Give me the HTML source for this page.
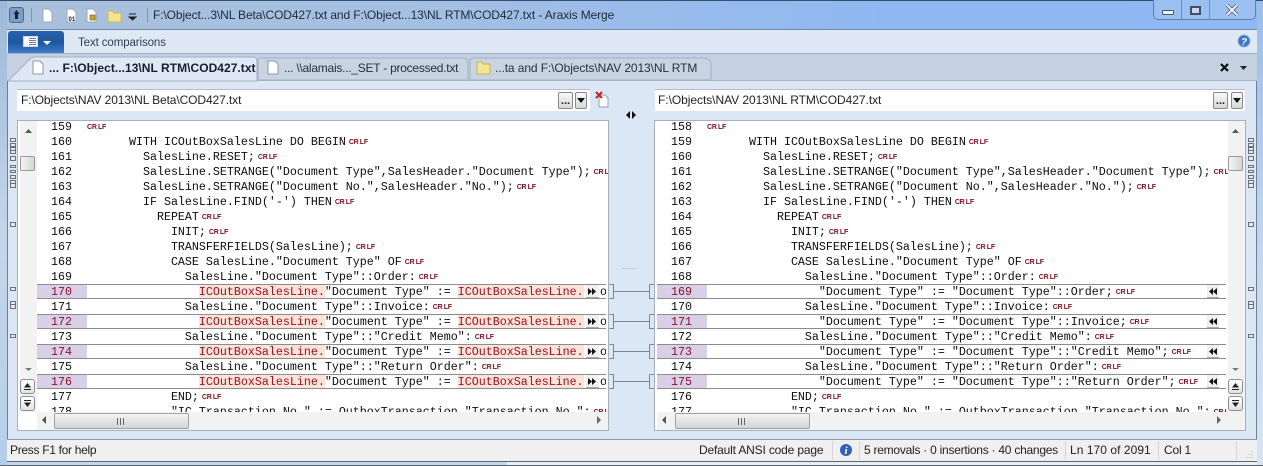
<!DOCTYPE html>
<html><head><meta charset="utf-8"><style>
html,body{margin:0;padding:0;width:1263px;height:466px;overflow:hidden;background:#dce7f5}
*{box-sizing:border-box}
#w{position:relative;width:1263px;height:466px;overflow:hidden;font-family:"Liberation Sans",sans-serif;font-size:12px;color:#222}
.a{position:absolute}
.t{position:absolute;white-space:pre;line-height:16px}
.pane{position:absolute;background:#fff;border:1px solid #a9b0ba;overflow:hidden;top:120px;height:311px}
.row{position:absolute;left:0;right:0;height:15px;line-height:15px;white-space:pre;font:11.67px/15px "Liberation Mono",monospace;color:#0c0c0c;overflow:hidden}
.row i{position:absolute;top:0;font-style:normal;width:50px;text-align:right;padding-right:15px}
.row u{position:absolute;top:0;text-decoration:none}
.row b{display:inline-block;font:bold 7px/15px "Liberation Sans",sans-serif;color:#7e1020;margin-left:3px;vertical-align:top;word-spacing:-.5px;letter-spacing:-.2px}
.row s{text-decoration:none;background:#fbe3d8;color:#9a1030}
.ch{position:absolute;height:15px;border-top:1px solid #8c8c8c;border-bottom:1px solid #8c8c8c;background:#fff}
.ch .row{height:13px}
.pur{position:absolute;top:0;height:13px;width:50px;background:#d9cfe6}
.btn{position:absolute;top:0;height:13px;background:#f0f0f0;border-bottom:1px solid #aaa}
.btn svg{position:absolute;left:2px;top:2px}
.sb{position:absolute;background:#f2f2f2}
.sbtn{position:absolute;width:15px;height:15px;border:1px solid #8a8f96;border-radius:3px;background:linear-gradient(#fff,#e2e2e2)}
.sep{position:absolute;top:441px;width:1px;height:19px;background:#d5d5d5}
.fld{position:absolute;top:89px;height:22px;background:#fff;border-top:1px solid #b8bec8}
.dd{position:absolute;top:92px;height:17px;border:1px solid #8a8a8a;border-radius:2px;background:linear-gradient(#f8f8f8,#d8d8d8)}
</style></head><body><div id="w">

<!-- title bar -->
<div class="a" style="left:0;top:0;width:1263px;height:466px;background:linear-gradient(90deg,#a9c0dc 0,#a5c0e2 30%,#8fb8f2 70%,#8fb8f4 100%);border-top:1px solid #35506f"></div>
<div class="a" style="left:0;top:1px;width:7px;height:465px;background:linear-gradient(#9db8d8,#c3d6ea 50%,#b5cee8)"></div>
<div class="a" style="left:1257px;top:1px;width:6px;height:465px;background:linear-gradient(#9bbde8,#c8d9ee 60%,#d8e4f2)"></div>
<div class="a" style="left:7px;top:461px;width:500px;height:4px;background:#c4d8ee"></div>
<div class="a" style="left:507px;top:461px;width:750px;height:4px;background:#e8eff7"></div>
<div class="a" style="left:0;top:465px;width:1263px;height:1px;background:#5c6670"></div>

<!-- content background -->
<div class="a" style="left:7px;top:81px;width:1250px;height:358px;background:#dce7f5;border-left:1px solid #6f7f94;border-right:1px solid #6f7f94"></div>

<!-- quick access -->
<div class="a" style="left:9px;top:7px;width:15px;height:16px;background:#7c9dc4;border:1px solid #4a6a90;border-radius:3px"></div>
<svg class="a" style="left:9px;top:7px" width="15" height="16"><path d="M7.500 3l3 4h-1.500v5h-3v-5h-1.500z" fill="#14243c"/></svg>
<div class="a" style="left:31px;top:8px;width:1px;height:14px;background:#7f93ad"></div>
<svg class="a" style="left:40px;top:7px" width="105" height="18">
<path d="M3 2h6l3 3v10H3z" fill="#fff" stroke="#9aa8b8"/>
<path d="M27 2h6l3 3v10h-9z" fill="#fff" stroke="#9aa8b8"/><text x="28.500" y="14" font-family="Liberation Sans" font-size="6" font-weight="bold" fill="#222">01</text>
<path d="M47 2h6l3 3v10h-9z" fill="#fff" stroke="#9aa8b8"/><rect x="50" y="8" width="5" height="5" fill="#d8a020" stroke="#555" stroke-width=".6"/>
<path d="M68 4h5l1 2h7v9H68z" fill="#f4e48c" stroke="#c8b860"/>
<path d="M89 7h7M89 10l3.500 3 3.500-3z" stroke="#222" fill="#222"/>
</svg>
<div class="a" style="left:147px;top:8px;width:1px;height:14px;background:#7f93ad"></div>
<div class="t" style="left:153px;top:7px;font-size:12px;letter-spacing:-.11px;color:#1f2a38">F:\Object...3\NL Beta\COD427.txt and F:\Object...13\NL RTM\COD427.txt - Araxis Merge</div>

<!-- window buttons -->
<div class="a" style="left:1153px;top:0;width:103px;height:20px;border:1px solid #5f7fa8;border-top:0;border-radius:0 0 5px 5px;background:#9ac0f2"></div>
<div class="a" style="left:1181px;top:0;width:1px;height:19px;background:#6f8fb8"></div>
<div class="a" style="left:1209px;top:0;width:1px;height:19px;background:#6f8fb8"></div>
<div class="a" style="left:1162px;top:10px;width:12px;height:5px;background:#f4f6fa;border:1px solid #47586e;border-radius:1px"></div>
<div class="a" style="left:1190px;top:6px;width:11px;height:9px;background:#c8d9ee;border:2px solid #3f5068"></div>
<svg class="a" style="left:1225px;top:4px" width="15" height="12"><path d="M2 1l10 10M12 1L2 11" stroke="#3f4f66" stroke-width="3.500"/><path d="M2 1l10 10M12 1L2 11" stroke="#eef2f8" stroke-width="2"/></svg>

<!-- ribbon -->
<div class="a" style="left:7px;top:29px;width:1250px;height:25px;background:#dfe9f5;border-top:1px solid #6f8bb0;border-bottom:1px solid #a0b0d8"></div>
<div class="a" style="left:8px;top:31px;width:56px;height:22px;background:linear-gradient(#2a62ad,#1e56a0 50%,#3f7cc8);border-radius:3px 3px 0 0"></div>
<div class="a" style="left:23px;top:36px;width:15px;height:11px;background:#fff;border:1px solid #cfd8e6"></div>
<div class="a" style="left:29px;top:38px;width:7px;height:7px;background:repeating-linear-gradient(#6f7f99 0 1px,#fff 1px 2px)"></div>
<div class="a" style="left:43px;top:41px;width:0;height:0;border:4px solid transparent;border-top:4px solid #fff"></div>
<div class="t" style="left:78px;top:35px;font-size:11.500px;letter-spacing:-.1px;color:#2c3f58">Text comparisons</div>
<svg class="a" style="left:1237px;top:34px" width="14" height="14"><circle cx="7" cy="7" r="6" fill="#3a78c8" stroke="#8fb0d8"/><text x="7" y="11" font-family="Liberation Sans" font-size="10" font-weight="bold" font-style="italic" fill="#fff" text-anchor="middle">?</text></svg>

<!-- tab strip -->
<div class="a" style="left:7px;top:54px;width:1250px;height:27px;background:#c5d0e0;border-bottom:1px solid #a8b4c6"></div>
<svg class="a" style="left:8px;top:55px" width="720" height="27">
<path d="M250 25V6q0-3 3-3h202q5 0 5 5v17z" fill="#c9d4e3" stroke="#a4b0c3"/>
<path d="M462 25V6q0-3 3-3h231q6 0 7 6v16z" fill="#c9d4e3" stroke="#a4b0c3"/>
<path d="M0 26L22 4q2-2 5-2h218q4 0 4 4v20z" fill="#dfe9f5" stroke="#a4b0c3"/>
</svg>
<svg class="a" style="left:30px;top:59px" width="16" height="17"><path d="M3 2h7l3 3v10H3z" fill="#fff" stroke="#8c99a8"/></svg>
<div class="t" style="left:49px;top:60px;font-size:12px;font-weight:bold;letter-spacing:.04px;color:#15202e">... F:\Object...13\NL RTM\COD427.txt</div>
<svg class="a" style="left:265px;top:59px" width="16" height="17"><path d="M3 2h7l3 3v10H3z" fill="#fff" stroke="#8c99a8"/></svg>
<div class="t" style="left:284px;top:60px;font-size:12px;letter-spacing:-.25px;color:#26303e">... \\alamais..._SET - processed.txt</div>
<svg class="a" style="left:476px;top:60px" width="16" height="15"><path d="M1 2h5l1 2h7v10H1z" fill="#f4e68e" stroke="#c2b25c"/></svg>
<div class="t" style="left:495px;top:60px;font-size:12px;letter-spacing:-.1px;color:#26303e">...ta and F:\Objects\NAV 2013\NL RTM</div>
<svg class="a" style="left:1219px;top:62px" width="32" height="12"><path d="M2 2l7 7M9 2L2 9" stroke="#111" stroke-width="2.200"/><path d="M21 4h7l-3.500 4z" fill="#222"/></svg>

<!-- path fields -->
<div class="fld" style="left:17px;width:573px"></div>
<div class="t" style="left:21px;top:92px;font-size:12px;letter-spacing:-.1px">F:\Objects\NAV 2013\NL Beta\COD427.txt</div>
<div class="dd" style="left:558px;width:15px;font:bold 11px/17px 'Liberation Sans';text-align:center">...</div>
<div class="dd" style="left:575px;width:12px"></div><div class="a" style="left:577px;top:98px;border:4px solid transparent;border-top:5px solid #111"></div>
<svg class="a" style="left:594px;top:90px" width="16" height="19"><path d="M5 5h6l3 3v9H5z" fill="#fff" stroke="#8fa0b4"/><path d="M2 2l6 6M8 2L2 8" stroke="#c8202a" stroke-width="2"/></svg>
<div class="fld" style="left:655px;width:590px"></div>
<div class="t" style="left:658px;top:92px;font-size:12px;letter-spacing:-.05px">F:\Objects\NAV 2013\NL RTM\COD427.txt</div>
<div class="dd" style="left:1213px;width:15px;font:bold 11px/17px 'Liberation Sans';text-align:center">...</div>
<div class="dd" style="left:1231px;width:12px"></div><div class="a" style="left:1233px;top:98px;border:4px solid transparent;border-top:5px solid #111"></div>
<svg class="a" style="left:625px;top:110px" width="13" height="10"><path d="M5 1v8L1 5zM7 1v8l4-4z" fill="#111"/></svg>
<div class="t" style="left:622px;top:258px;font-size:9px;color:#98a4b2;letter-spacing:0">......</div>

<!-- left pane -->
<div class="pane" style="left:17px;width:592px"></div>
<div class="sb" style="left:20px;top:121px;width:17px;height:291px"></div>
<div class="sb" style="left:37px;top:412px;width:571px;height:18px"></div>

<div class="a" style="left:37px;top:121px;width:571px;height:291px;overflow:hidden">
<div class="row" style="top:-1px"><i>159</i><u style="left:50px"><b style="margin:0">CR LF</b></u></div>
<div class="row" style="top:14px"><i>160</i><u style="left:50px">      WITH ICOutBoxSalesLine DO BEGIN<b>CR LF</b></u></div>
<div class="row" style="top:29px"><i>161</i><u style="left:50px">        SalesLine.RESET;<b>CR LF</b></u></div>
<div class="row" style="top:44px"><i>162</i><u style="left:50px">        SalesLine.SETRANGE("Document Type",SalesHeader."Document Type");<b>CR LF</b></u></div>
<div class="row" style="top:59px"><i>163</i><u style="left:50px">        SalesLine.SETRANGE("Document No.",SalesHeader."No.");<b>CR LF</b></u></div>
<div class="row" style="top:74px"><i>164</i><u style="left:50px">        IF SalesLine.FIND('-') THEN<b>CR LF</b></u></div>
<div class="row" style="top:89px"><i>165</i><u style="left:50px">          REPEAT<b>CR LF</b></u></div>
<div class="row" style="top:104px"><i>166</i><u style="left:50px">            INIT;<b>CR LF</b></u></div>
<div class="row" style="top:119px"><i>167</i><u style="left:50px">            TRANSFERFIELDS(SalesLine);<b>CR LF</b></u></div>
<div class="row" style="top:134px"><i>168</i><u style="left:50px">            CASE SalesLine."Document Type" OF<b>CR LF</b></u></div>
<div class="row" style="top:149px"><i>169</i><u style="left:50px">              SalesLine."Document Type"::Order:<b>CR LF</b></u></div>
<div class="row" style="top:179px"><i>171</i><u style="left:50px">              SalesLine."Document Type"::Invoice:<b>CR LF</b></u></div>
<div class="row" style="top:209px"><i>173</i><u style="left:50px">              SalesLine."Document Type"::"Credit Memo":<b>CR LF</b></u></div>
<div class="row" style="top:239px"><i>175</i><u style="left:50px">              SalesLine."Document Type"::"Return Order":<b>CR LF</b></u></div>
<div class="row" style="top:269px"><i>177</i><u style="left:50px">            END;<b>CR LF</b></u></div>
<div class="row" style="top:284px"><i>178</i><u style="left:50px">            "IC Transaction No." := OutboxTransaction."Transaction No.";<b>CR LF</b></u></div>

<div class="ch" style="left:0;top:163px;width:569px"><div class="pur"></div><div class="row" style="top:0"><i style="color:#8b1030">170</i><u style="left:50px">                <s>ICOutBoxSalesLine.</s>"Document Type" := <s>ICOutBoxSalesLine.</s></u></div><div class="btn" style="left:549px;width:13px"><svg width="9" height="9"><path d="M0 1v7l4-3.500zM4 1v7l4-3.500z" fill="#111"/></svg></div><div class="row" style="top:0;left:563px">o</div></div>
<div class="ch" style="left:0;top:193px;width:569px"><div class="pur"></div><div class="row" style="top:0"><i style="color:#8b1030">172</i><u style="left:50px">                <s>ICOutBoxSalesLine.</s>"Document Type" := <s>ICOutBoxSalesLine.</s></u></div><div class="btn" style="left:549px;width:13px"><svg width="9" height="9"><path d="M0 1v7l4-3.500zM4 1v7l4-3.500z" fill="#111"/></svg></div><div class="row" style="top:0;left:563px">o</div></div>
<div class="ch" style="left:0;top:223px;width:569px"><div class="pur"></div><div class="row" style="top:0"><i style="color:#8b1030">174</i><u style="left:50px">                <s>ICOutBoxSalesLine.</s>"Document Type" := <s>ICOutBoxSalesLine.</s></u></div><div class="btn" style="left:549px;width:13px"><svg width="9" height="9"><path d="M0 1v7l4-3.500zM4 1v7l4-3.500z" fill="#111"/></svg></div><div class="row" style="top:0;left:563px">o</div></div>
<div class="ch" style="left:0;top:253px;width:569px"><div class="pur"></div><div class="row" style="top:0"><i style="color:#8b1030">176</i><u style="left:50px">                <s>ICOutBoxSalesLine.</s>"Document Type" := <s>ICOutBoxSalesLine.</s></u></div><div class="btn" style="left:549px;width:13px"><svg width="9" height="9"><path d="M0 1v7l4-3.500zM4 1v7l4-3.500z" fill="#111"/></svg></div><div class="row" style="top:0;left:563px">o</div></div>
</div>

<!-- left scroll -->
<svg class="a" style="left:24px;top:128px" width="10" height="6"><path d="M1 5h7L4.500 1z" fill="#555"/></svg>
<svg class="a" style="left:24px;top:367px" width="10" height="5"><path d="M1 1h7L4.500 4z" fill="#777"/></svg>
<div class="a" style="left:20px;top:156px;width:15px;height:15px;border:1px solid #9a9a9a;border-radius:2px;background:linear-gradient(90deg,#f4f4f4,#d6d6d6)"></div>
<div class="sbtn" style="left:20px;top:379px"><svg width="13" height="13"><path d="M3 7.500L6.500 3 10 7.500z" fill="#222"/><path d="M3 9.500h7" stroke="#222"/></svg></div>
<div class="sbtn" style="left:20px;top:396px"><svg width="13" height="13"><path d="M3 5.500L6.500 10 10 5.500z" fill="#222"/><path d="M3 3.500h7" stroke="#222"/></svg></div>
<svg class="a" style="left:40px;top:415px" width="8" height="10"><path d="M6 1v8L2 5z" fill="#555"/></svg>
<div class="a" style="left:54px;top:413px;width:135px;height:16px;border:1px solid #a2a2a2;border-radius:2px;background:linear-gradient(#f4f4f4,#d4d4d4)"></div>
<div class="a" style="left:117px;top:418px;width:7px;height:7px;background:repeating-linear-gradient(90deg,#666 0 1px,transparent 1px 3px)"></div>
<svg class="a" style="left:595px;top:415px" width="8" height="10"><path d="M2 1v8l4-4z" fill="#666"/></svg>

<!-- connectors -->
<svg class="a" style="left:608px;top:280px" width="48" height="135" fill="none" stroke="#7d8791">
<path d="M1.500 4.500h4v14h-4M41.500 4.500h5M41.500 4.500v14h5M5.500 11.500h36"/>
<path d="M1.500 34.500h4v14h-4M41.500 34.500h5M41.500 34.500v14h5M5.500 41.500h36"/>
<path d="M1.500 64.500h4v14h-4M41.500 64.500h5M41.500 64.500v14h5M5.500 71.500h36"/>
<path d="M1.500 94.500h4v14h-4M41.500 94.500h5M41.500 94.500v14h5M5.500 101.500h36"/>
</svg>

<!-- right pane -->
<div class="pane" style="left:654px;width:592px"></div>
<div class="sb" style="left:1228px;top:121px;width:17px;height:291px"></div>
<div class="sb" style="left:657px;top:412px;width:588px;height:18px"></div>

<div class="a" style="left:657px;top:121px;width:571px;height:291px;overflow:hidden">
<div class="row" style="top:-1px"><i>158</i><u style="left:50px"><b style="margin:0">CR LF</b></u></div>
<div class="row" style="top:14px"><i>159</i><u style="left:50px">      WITH ICOutBoxSalesLine DO BEGIN<b>CR LF</b></u></div>
<div class="row" style="top:29px"><i>160</i><u style="left:50px">        SalesLine.RESET;<b>CR LF</b></u></div>
<div class="row" style="top:44px"><i>161</i><u style="left:50px">        SalesLine.SETRANGE("Document Type",SalesHeader."Document Type");<b>CR LF</b></u></div>
<div class="row" style="top:59px"><i>162</i><u style="left:50px">        SalesLine.SETRANGE("Document No.",SalesHeader."No.");<b>CR LF</b></u></div>
<div class="row" style="top:74px"><i>163</i><u style="left:50px">        IF SalesLine.FIND('-') THEN<b>CR LF</b></u></div>
<div class="row" style="top:89px"><i>164</i><u style="left:50px">          REPEAT<b>CR LF</b></u></div>
<div class="row" style="top:104px"><i>165</i><u style="left:50px">            INIT;<b>CR LF</b></u></div>
<div class="row" style="top:119px"><i>166</i><u style="left:50px">            TRANSFERFIELDS(SalesLine);<b>CR LF</b></u></div>
<div class="row" style="top:134px"><i>167</i><u style="left:50px">            CASE SalesLine."Document Type" OF<b>CR LF</b></u></div>
<div class="row" style="top:149px"><i>168</i><u style="left:50px">              SalesLine."Document Type"::Order:<b>CR LF</b></u></div>
<div class="row" style="top:179px"><i>170</i><u style="left:50px">              SalesLine."Document Type"::Invoice:<b>CR LF</b></u></div>
<div class="row" style="top:209px"><i>172</i><u style="left:50px">              SalesLine."Document Type"::"Credit Memo":<b>CR LF</b></u></div>
<div class="row" style="top:239px"><i>174</i><u style="left:50px">              SalesLine."Document Type"::"Return Order":<b>CR LF</b></u></div>
<div class="row" style="top:269px"><i>176</i><u style="left:50px">            END;<b>CR LF</b></u></div>
<div class="row" style="top:284px"><i>177</i><u style="left:50px">            "IC Transaction No." := OutboxTransaction."Transaction No.";<b>CR LF</b></u></div>

<div class="ch" style="left:0;top:163px;width:569px"><div class="pur"></div><div class="row" style="top:0"><i style="color:#8b1030">169</i><u style="left:50px">                "Document Type" := "Document Type"::Order;<b>CR LF</b></u></div><div class="btn" style="left:550px;width:12px"><svg width="9" height="9"><path d="M4 1v7L0 4.500zM8 1v7L4 4.500z" fill="#111"/></svg></div></div>
<div class="ch" style="left:0;top:193px;width:569px"><div class="pur"></div><div class="row" style="top:0"><i style="color:#8b1030">171</i><u style="left:50px">                "Document Type" := "Document Type"::Invoice;<b>CR LF</b></u></div><div class="btn" style="left:550px;width:12px"><svg width="9" height="9"><path d="M4 1v7L0 4.500zM8 1v7L4 4.500z" fill="#111"/></svg></div></div>
<div class="ch" style="left:0;top:223px;width:569px"><div class="pur"></div><div class="row" style="top:0"><i style="color:#8b1030">173</i><u style="left:50px">                "Document Type" := "Document Type"::"Credit Memo";<b>CR LF</b></u></div><div class="btn" style="left:550px;width:12px"><svg width="9" height="9"><path d="M4 1v7L0 4.500zM8 1v7L4 4.500z" fill="#111"/></svg></div></div>
<div class="ch" style="left:0;top:253px;width:569px"><div class="pur"></div><div class="row" style="top:0"><i style="color:#8b1030">175</i><u style="left:50px">                "Document Type" := "Document Type"::"Return Order";<b>CR LF</b></u></div><div class="btn" style="left:550px;width:12px"><svg width="9" height="9"><path d="M4 1v7L0 4.500zM8 1v7L4 4.500z" fill="#111"/></svg></div></div>
</div>

<!-- right scroll -->
<svg class="a" style="left:1231px;top:128px" width="10" height="6"><path d="M1 5h7L4.500 1z" fill="#555"/></svg>
<svg class="a" style="left:1231px;top:367px" width="10" height="5"><path d="M1 1h7L4.500 4z" fill="#777"/></svg>
<div class="a" style="left:1228px;top:156px;width:15px;height:15px;border:1px solid #9a9a9a;border-radius:2px;background:linear-gradient(90deg,#f4f4f4,#d6d6d6)"></div>
<div class="sbtn" style="left:1228px;top:379px"><svg width="13" height="13"><path d="M3 7.500L6.500 3 10 7.500z" fill="#222"/><path d="M3 9.500h7" stroke="#222"/></svg></div>
<div class="sbtn" style="left:1228px;top:396px"><svg width="13" height="13"><path d="M3 5.500L6.500 10 10 5.500z" fill="#222"/><path d="M3 3.500h7" stroke="#222"/></svg></div>
<svg class="a" style="left:660px;top:415px" width="8" height="10"><path d="M6 1v8L2 5z" fill="#555"/></svg>
<div class="a" style="left:675px;top:413px;width:135px;height:16px;border:1px solid #a2a2a2;border-radius:2px;background:linear-gradient(#f4f4f4,#d4d4d4)"></div>
<div class="a" style="left:738px;top:418px;width:7px;height:7px;background:repeating-linear-gradient(90deg,#666 0 1px,transparent 1px 3px)"></div>
<svg class="a" style="left:1215px;top:415px" width="8" height="10"><path d="M2 1v8l4-4z" fill="#666"/></svg>

<!-- overview strips -->
<svg class="a" style="left:9px;top:130px" width="8" height="215" fill="#e4e9f0" stroke="#6c7078">
<path d="M1.500 8.500h5v3h-5zM1.500 13.500h5v3h-5zM1.500 17.500h5v3h-5zM1.500 20.500h5v3h-5zM1.500 26.500h5v4h-5zM1.500 35.500h5v2h-5zM1.500 40.500h5v2h-5zM1.500 45.500h5v3h-5zM1.500 50.500h5v3h-5zM1.500 53.500h5v4h-5zM1.500 92.500h5v4h-5zM1.500 157.500h5v3h-5zM1.500 171.500h5v3h-5zM1.500 174.500h5v4h-5zM1.500 204.500h5v3h-5z"/>
</svg>
<svg class="a" style="left:1247px;top:130px" width="8" height="215" fill="#e4e9f0" stroke="#6c7078">
<path d="M1.500 8.500h5v3h-5zM1.500 13.500h5v3h-5zM1.500 17.500h5v3h-5zM1.500 20.500h5v3h-5zM1.500 26.500h5v4h-5zM1.500 35.500h5v2h-5zM1.500 40.500h5v2h-5zM1.500 45.500h5v3h-5zM1.500 50.500h5v3h-5zM1.500 53.500h5v4h-5zM1.500 92.500h5v4h-5zM1.500 157.500h5v3h-5zM1.500 171.500h5v3h-5zM1.500 174.500h5v4h-5zM1.500 204.500h5v3h-5z"/>
</svg>

<!-- status bar -->
<div class="a" style="left:7px;top:439px;width:1250px;height:23px;background:#f0f0f0;border-top:1px solid #8f9aa8;border-bottom:1px solid #5c6670"></div>
<div class="t" style="left:10px;top:442px;font-size:12px;letter-spacing:-.3px">Press F1 for help</div>
<div class="t" style="left:699px;top:442px;font-size:12px;letter-spacing:-.17px">Default ANSI code page</div>
<div class="sep" style="left:832px"></div>
<svg class="a" style="left:839px;top:443px" width="14" height="14"><circle cx="7" cy="7" r="6" fill="#2f62b8"/><text x="7" y="11" font-family="Liberation Serif" font-size="11" font-weight="bold" font-style="italic" fill="#fff" text-anchor="middle">i</text></svg>
<div class="sep" style="left:859px"></div>
<div class="t" style="left:864px;top:442px;font-size:12px;letter-spacing:-.25px">5 removals · 0 insertions · 40 changes</div>
<div class="sep" style="left:1065px"></div>
<div class="t" style="left:1070px;top:442px;font-size:12px;letter-spacing:.05px">Ln 170 of 2091</div>
<div class="sep" style="left:1158px"></div>
<div class="t" style="left:1164px;top:442px;font-size:12px;letter-spacing:-.2px">Col 1</div>
<div class="sep" style="left:1236px"></div>
<svg class="a" style="left:1244px;top:450px" width="10" height="10"><path d="M7.500 1.500h1M5 4.500h1M7.500 4.500h1M2.500 7.500h1M5 7.500h1M7.500 7.500h1" stroke="#b0b0b0"/></svg>

</div></body></html>
